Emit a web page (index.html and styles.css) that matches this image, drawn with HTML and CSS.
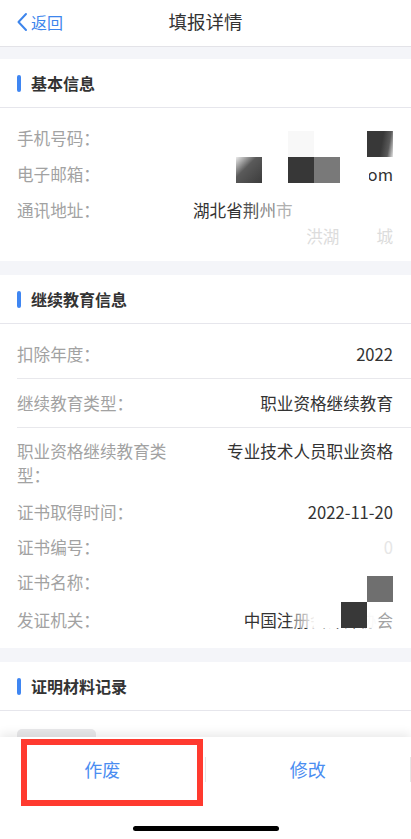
FILE: index.html
```html
<!DOCTYPE html>
<html lang="zh-CN">
<head>
<meta charset="utf-8">
<title>填报详情</title>
<link rel="stylesheet" href="styles.css">
</head>
<body>
<div class="page">
  <header class="topbar">
    <div class="back">
      <svg class="chev" width="12" height="20" viewBox="0 0 12 20"><path d="M10 2 L2.5 10 L10 18" fill="none" stroke="#3d85ec" stroke-width="2" stroke-linecap="round" stroke-linejoin="round"/></svg>
      <span>返回</span>
    </div>
    <div class="title">填报详情</div>
    <div></div>
  </header>

  <main class="content">
    <section class="card">
      <div class="card-head"><span class="bar"></span><span class="card-title">基本信息</span></div>
      <div class="card-body body-basic">
        <div class="row"><div class="label">手机号码：</div><div class="value"></div></div>
        <div class="row"><div class="label">电子邮箱：</div><div class="value">.com</div></div>
        <div class="row"><div class="label">通讯地址：</div>
          <div class="value addr">
            <div class="addr-line1"><span>湖北省</span><span class="f1">荆</span><span class="f2">州</span><span class="f3">市</span></div>
            <div class="addr-line2"><span>洪湖</span><span>城</span></div>
          </div>
        </div>
      </div>
    </section>

    <section class="card">
      <div class="card-head"><span class="bar"></span><span class="card-title">继续教育信息</span></div>
      <div class="card-body body-edu">
        <div class="row sep"><div class="label">扣除年度：</div><div class="value">2022</div></div>
        <div class="row sep"><div class="label">继续教育类型：</div><div class="value">职业资格继续教育</div></div>
        <div class="row tall"><div class="label">职业资格继续教育类型：</div><div class="value">专业技术人员职业资格</div></div>
        <div class="row tight"><div class="label">证书取得时间：</div><div class="value">2022-11-20</div></div>
        <div class="row tight"><div class="label">证书编号：</div><div class="value faint">0</div></div>
        <div class="row tight"><div class="label">证书名称：</div><div class="value"></div></div>
        <div class="row tight last"><div class="label">发证机关：</div><div class="value">中国注册会计师协会</div></div>
      </div>
    </section>

    <section class="card">
      <div class="card-head"><span class="bar"></span><span class="card-title">证明材料记录</span></div>
      <div class="card-body body-files">
        <div class="thumb"></div>
      </div>
    </section>
  </main>

  <footer class="actions">
    <div class="btns">
      <div class="btn">作废</div>
      <div class="btn">修改</div>
    </div>
    <div class="home-indicator"></div>
    <div class="annot"></div>
  </footer>

  <div class="mosaic">
    <div class="cell c1"></div>
    <div class="cell c2"></div>
    <div class="cell c3"></div>
    <div class="cell c4"></div>
    <div class="cell c5"></div>
    <div class="cell c5w"></div>
    <div class="cell c6"></div>
    <div class="cell c7"></div>
    <div class="cell c8"></div>
    <div class="cell c8f"></div>
    <div class="cell c9"></div>
  </div>
</div>
</body>
</html>
```

FILE: styles.css
```css
* { box-sizing: border-box; }
html, body { margin: 0; padding: 0; }
body {
  font-family: "Noto Sans CJK SC", "Noto Sans", sans-serif;
  background: #f4f5f9;
  color: #333;
}
.page {
  position: relative;
  width: 411px;
  height: 839px;
  display: flex;
  flex-direction: column;
  overflow: hidden;
  background: #f4f5f9;
}
.topbar {
  height: 47px;
  flex: 0 0 47px;
  background: #fff;
  border-bottom: 1px solid #e3e3e8;
  display: grid;
  grid-template-columns: 1fr auto 1fr;
  align-items: center;
}
.back {
  display: flex;
  align-items: center;
  padding-left: 16px;
  color: #3d85ec;
  font-size: 16px;
  line-height: 20px;
  margin-top: -2px;
}
.chev { margin-right: 3px; }
.title {
  font-size: 18.5px;
  line-height: 24px;
  color: #333;
  margin-top: -4px;
}
.content {
  flex: 1;
  overflow: hidden;
  padding-top: 12px;
}
.card {
  background: #fff;
  margin-bottom: 14px;
}
.card-head {
  height: 49px;
  display: flex;
  align-items: center;
  padding-left: 17px;
  border-bottom: 1px solid #e6e6ec;
}
.bar {
  width: 4px;
  height: 17px;
  border-radius: 2px;
  background: #3f86f2;
  margin-right: 10px;
}
.card-title {
  font-size: 16px;
  font-weight: 700;
  color: #333;
  line-height: 22px;
}
.card-body { font-size: 16.6px; }
.row {
  display: flex;
  justify-content: space-between;
  align-items: flex-start;
  margin-left: 17px;
  padding: 5px 18px 5px 0;
  line-height: 26px;
}
.label {
  flex: 0 0 158px;
  color: #a2a2a2;
}
.value {
  flex: 1;
  text-align: right;
  color: #333;
}
.value.faint { color: #e6e6e6; }
.body-basic { padding: 12px 0 7px; }
.addr { flex: 0 0 200px; text-align: left; }
.addr-line2 {
  display: flex;
  justify-content: flex-end;
  gap: 37px;
  color: #dcdcdc;
}
.f1 { color: #555; }
.f2 { color: #8a8a8a; }
.f3 { color: #b0b0b0; }
.body-edu { padding: 6px 0 10px; }
.row.sep {
  padding-top: 11px;
  padding-bottom: 11px;
  border-bottom: 1px solid #e8e8ec;
}
.row.tall {
  line-height: 24px;
  padding-top: 11px;
  padding-bottom: 8px;
}
.row.tight {
  line-height: 25px;
  padding-top: 5px;
  padding-bottom: 5px;
}
.row.last { padding-top: 8px; }
.body-files { padding: 18px 17px 0; height: 100px; }
.thumb {
  width: 79px;
  height: 80px;
  border-radius: 5px;
  background: #e9e9eb;
}
.actions {
  position: relative;
  flex: 0 0 102px;
  background: #fff;
  box-shadow: 0 -3px 10px rgba(0,0,0,0.09);
  display: flex;
  flex-direction: column;
  padding-top: 20px;
}
.btns { display: flex; }
.btn {
  flex: 1;
  height: 25px;
  line-height: 25px;
  text-align: center;
  font-size: 18px;
  color: #4a8df1;
  border-right: 1px solid #e6e6e6;
}
.home-indicator {
  align-self: center;
  width: 146px;
  height: 5px;
  border-radius: 3px;
  background: #000;
  margin-top: 44px;
}
.annot {
  position: absolute;
  left: 21px;
  top: 2px;
  width: 182px;
  height: 67px;
  border: 6px solid #ff3a2f;
}
.mosaic {
  position: absolute;
  left: 0;
  top: 0;
  width: 411px;
  height: 839px;
  pointer-events: none;
}
.cell { position: absolute; width: 26px; height: 26px; }
.c1 { left: 288px; top: 131px; background: #f8f8f8; }
.c2 { left: 367px; top: 131px; background: linear-gradient(100deg, #383838 55%, #5a5a5a 80%, #e6e6e6 100%); }
.c3 { left: 236px; top: 157px; background: linear-gradient(135deg, #ececec 0%, #5a5a5a 40%, #3c3c3c 100%); }
.c4 { left: 288px; top: 157px; background: #373737; }
.c5 { left: 314px; top: 157px; background: #797979; }
.c5w { left: 340px; top: 157px; width: 29px; background: #fff; }
.c6 { left: 367px; top: 576px; background: #6f6f6f; }
.c7 { left: 341px; top: 602px; background: #383838; }
.c8 { left: 314px; top: 602px; width: 27px; background: #fff; }
.c8f { left: 290px; top: 602px; width: 24px; background: linear-gradient(to right, rgba(255,255,255,0.25), rgba(255,255,255,0.95)); }
.c9 { left: 367px; top: 602px; background: linear-gradient(to right, rgba(255,255,255,0.97) 0%, rgba(255,255,255,0.97) 42%, rgba(255,255,255,0.55) 48%, rgba(255,255,255,0.55) 100%); }
```
